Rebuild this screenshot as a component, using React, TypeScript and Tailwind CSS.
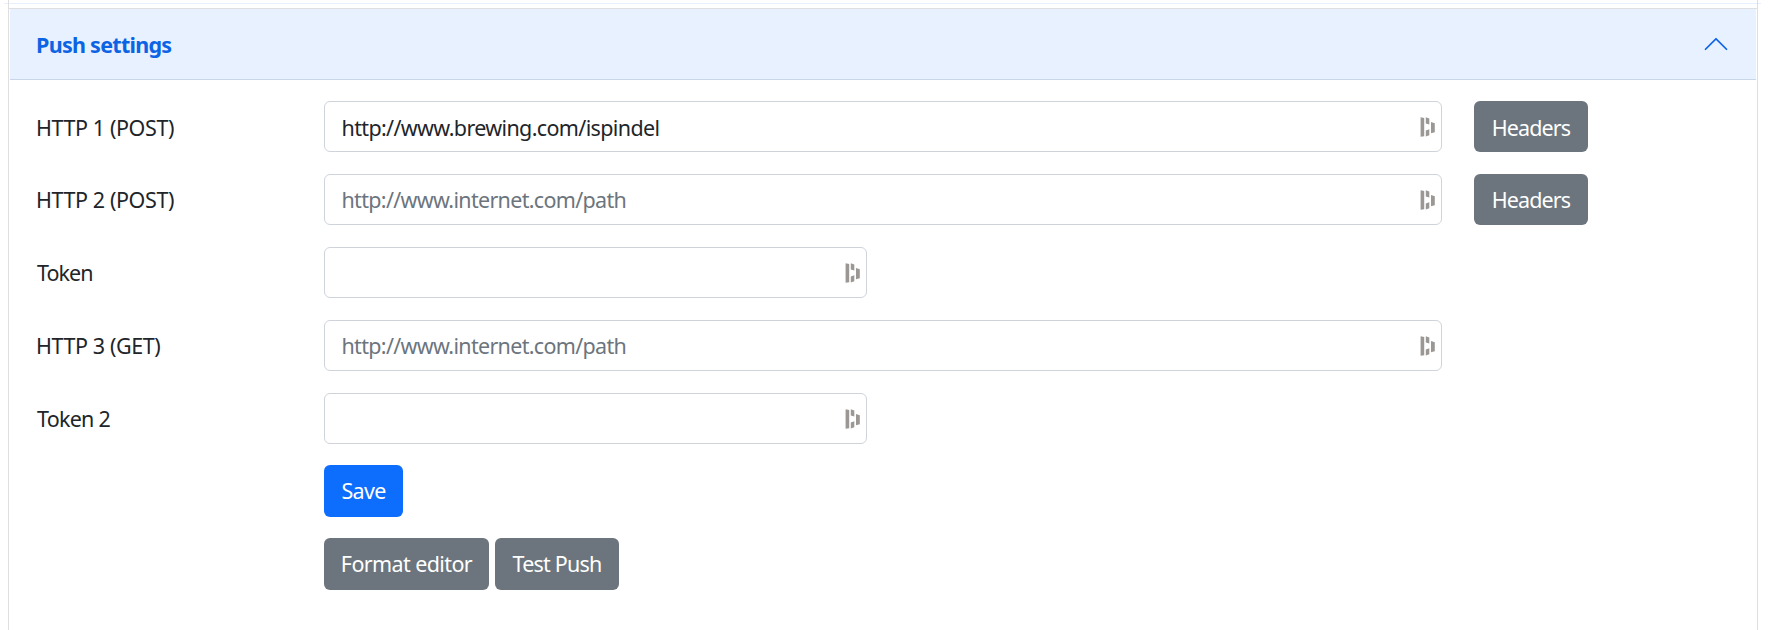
import React from "react";

function FieldIcon() {
  return (
    <svg width="16" height="20" viewBox="0 0 16 20" className="shrink-0" fill="#9b9794" aria-hidden="true">
      <path d="M1.6.3 5.2 1v18.2L1.6 19.8Z" />
      <path d="M6.8.3 10.3 1.5V7.6L6.8 6.4Z" />
      <path d="M6.8 13.6 10.3 12.3v6L6.8 19.6Z" />
      <path d="M12 5 15.8 6.2v9L12 16.2Z" />
    </svg>
  );
}

type FieldProps = { label: string; value?: string; placeholder?: string; short?: boolean; headers?: boolean; labelClass: string; inputClass?: string; buttonClass?: string };

function Field({ label, value, placeholder, short, headers, labelClass, inputClass = "", buttonClass = "pt-[2px]" }: FieldProps) {
  return (
    <div className="flex h-[51px] items-stretch">
      <label className={`w-[288px] shrink-0 ${labelClass}`}>{label}</label>
      <div className={`flex shrink-0 items-center rounded-[6px] border border-[#ced4da] bg-white pr-[6px] pl-[16.5px] ${short ? "w-[543px]" : "w-[1118px]"}`}>
        <input
          aria-label={label}
          defaultValue={value}
          placeholder={placeholder}
          className={`h-[49px] min-w-0 flex-1 bg-transparent text-[#212529] outline-none placeholder:text-[#6c757d] ${inputClass}`}
        />
        <FieldIcon />
      </div>
      {headers && (
        <button className={`ml-8 w-[114px] rounded-[6px] bg-[#6c757d] tracking-[-0.87px] text-white ${buttonClass}`}>Headers</button>
      )}
    </div>
  );
}

export default function App() {
  return (
    <div className="flex h-[630px] flex-col overflow-hidden bg-white px-[8px] font-['Noto_Sans',sans-serif] text-[21.5px] text-[#212529]">
      <div className="-mx-1 mt-[3px] mr-0 h-px shrink-0 bg-[#e7f0ff]" />
      <main className="-mt-1 mr-[3px] flex-1 border-x border-[#dfdfdf] pt-2">
        <section className="border-t border-[#dfdfdf]">
          <h2 className="mx-px flex h-[71px] items-center justify-between border-b border-[#c9d5e8] bg-[#e7f1ff] pr-[26px] pl-[26px] font-bold text-[#0c63e4]">
            <span className="pt-[2px] tracking-[-0.72px]">Push settings</span>
            <svg width="28" height="28" viewBox="0 0 16 16" fill="#0c63e4" aria-hidden="true">
              <path d="M7.646 4.646a.5.5 0 0 1 .708 0l6 6a.5.5 0 0 1-.708.708L8 5.707l-5.646 5.647a.5.5 0 0 1-.708-.708z" />
            </svg>
          </h2>
          <form className="flex flex-col gap-[22px] pt-[21px] pl-[27px]">
            <Field label="HTTP 1 (POST)" labelClass="tracking-[-0.4px] leading-[54px]" value="http://www.brewing.com/ispindel" inputClass="pt-px tracking-[-0.64px]" headers buttonClass="pt-[3px]" />
            <Field label="HTTP 2 (POST)" labelClass="tracking-[-0.4px] leading-[52px]" placeholder="http://www.internet.com/path" inputClass="tracking-[-0.68px]" headers />
            <Field label="Token" labelClass="pl-px tracking-[-0.95px] leading-[52px]" short />
            <Field label="HTTP 3 (GET)" labelClass="tracking-[-0.4px] leading-[52px]" placeholder="http://www.internet.com/path" inputClass="tracking-[-0.68px]" />
            <Field label="Token 2" labelClass="pl-px tracking-[-0.76px] leading-[52px]" short />
            <div className="-mt-px ml-[288px] flex h-[52px]">
              <button className="w-[79px] rounded-[6px] bg-[#0d6efd] pt-px tracking-[-0.68px] text-white">Save</button>
            </div>
            <div className="-mt-px ml-[288px] flex h-[52px] gap-[6px]">
              <button className="w-[165px] rounded-[6px] bg-[#6c757d] pt-px tracking-[-0.6px] text-white">Format editor</button>
              <button className="w-[124px] rounded-[6px] bg-[#6c757d] pt-px tracking-[-0.81px] text-white">Test Push</button>
            </div>
          </form>
        </section>
      </main>
    </div>
  );
}
